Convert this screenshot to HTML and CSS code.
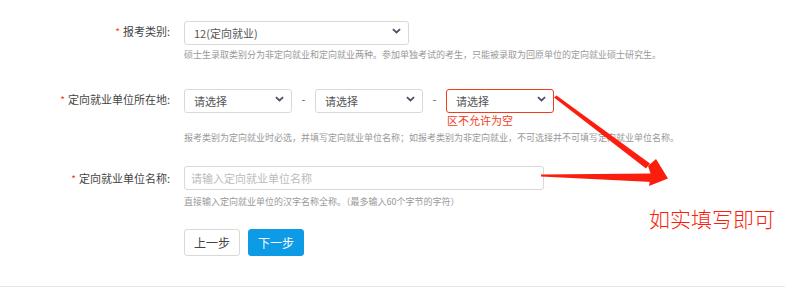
FILE: index.html
```html
<!DOCTYPE html>
<html>
<head>
    <meta charset="utf-8">
    <title>定向就业信息</title>
    <link rel="stylesheet" href="styles.css">
</head>
<body>
    <div class="page">
        <form class="apply-form">
            <div class="form-item item-type">
                <label class="form-label"><span class="req">*</span>报考类别:</label>
                <div class="form-field">
                    <div class="select-wrap wide">
                        <select class="select">
                            <option>12(定向就业)</option>
                        </select>
                        <svg class="chevron" viewBox="0 0 10 6"><path d="M1 1l4 3.6L9 1" /></svg>
                    </div>
                    <p class="help">硕士生录取类别分为非定向就业和定向就业两种。参加单独考试的考生，只能被录取为回原单位的定向就业硕士研究生。</p>
                </div>
            </div>

            <div class="form-item item-place">
                <label class="form-label"><span class="req">*</span>定向就业单位所在地:</label>
                <div class="form-field">
                    <div class="select-group">
                        <div class="select-wrap short">
                            <select class="select"><option>请选择</option></select>
                            <svg class="chevron" viewBox="0 0 10 6"><path d="M1 1l4 3.6L9 1" /></svg>
                        </div>
                        <span class="dash">-</span>
                        <div class="select-wrap short">
                            <select class="select"><option>请选择</option></select>
                            <svg class="chevron" viewBox="0 0 10 6"><path d="M1 1l4 3.6L9 1" /></svg>
                        </div>
                        <span class="dash">-</span>
                        <div class="select-col">
                            <div class="select-wrap short is-error">
                                <select class="select"><option>请选择</option></select>
                                <svg class="chevron" viewBox="0 0 10 6"><path d="M1 1l4 3.6L9 1" /></svg>
                            </div>
                            <p class="error-msg">区不允许为空</p>
                        </div>
                    </div>
                    <p class="help">报考类别为定向就业时必选，并填写定向就业单位名称；如报考类别为非定向就业，不可选择并不可填写定向就业单位名称。</p>
                </div>
            </div>

            <div class="form-item item-name">
                <label class="form-label"><span class="req">*</span>定向就业单位名称:</label>
                <div class="form-field">
                    <input class="text-input" type="text" placeholder="请输入定向就业单位名称">
                    <p class="help">直接输入定向就业单位的汉字名称全称。（最多输入60个字节的字符）</p>
                </div>
            </div>

            <div class="form-actions">
                <button type="button" class="btn btn-default">上一步</button>
                <button type="button" class="btn btn-primary">下一步</button>
            </div>
        </form>

        <!-- annotation drawn on top of the screenshot -->
        <svg class="annot-arrows" viewBox="0 0 801 289">
            <polygon points="554,97.5 556.5,95.5 650,163.5 646,168.5" />
            <polygon points="541,174.5 541,176.5 652,182 653,173.5" />
            <polygon points="656,159 668,178.5 649,186 651,175 648,166" />
        </svg>
        <div class="annot-text">如实填写即可</div>
    </div>
</body>
</html>
```

FILE: styles.css
```css
* {
    box-sizing: border-box;
}

body {
    margin: 0;
    font-family: "Noto Sans CJK SC", "Noto Sans", sans-serif;
    background-color: #fff;
    color: #333;
}

.page {
    position: relative;
    width: 785px;
    height: 287px;
    border-bottom: 1px solid #e5e5e5;
}

.apply-form {
    padding-top: 19px;
}

.form-item {
    display: grid;
    grid-template-columns: 170px 1fr;
    column-gap: 14px;
}

.item-type {
    margin-bottom: 25px;
}

.item-place {
    margin-bottom: 21px;
}

.item-name {
    margin-bottom: 20px;
}

.form-label {
    height: 24px;
    line-height: 24px;
    font-size: 11px;
    text-align: right;
    color: #444;
    white-space: nowrap;
}

.req {
    color: #f23c1e;
    font-size: 10px;
    margin-right: 3px;
}

.form-field {
    min-width: 0;
}

.select-wrap {
    position: relative;
    height: 24px;
}

.select-wrap.wide {
    width: 225px;
}

.select-wrap.short {
    width: 108px;
}

.select {
    -webkit-appearance: none;
    appearance: none;
    width: 100%;
    height: 24px;
    padding: 0 20px 0 9px;
    border: 1px solid #d9d9d9;
    border-radius: 3px;
    background-color: #fff;
    font-family: inherit;
    font-size: 11px;
    color: #555;
    outline: none;
}

.is-error .select {
    border-color: #f23c1e;
}

.chevron {
    position: absolute;
    right: 8px;
    top: 9px;
    width: 9px;
    height: 6px;
    fill: none;
    stroke: #4a5263;
    stroke-width: 2;
    pointer-events: none;
}

.select-group {
    display: flex;
    align-items: flex-start;
}

.dash {
    width: 23px;
    height: 24px;
    line-height: 24px;
    text-align: center;
    font-size: 11px;
    color: #555;
}

.select-col {
    display: flex;
    flex-direction: column;
}

.error-msg {
    margin: 2px 0 0 1px;
    height: 14px;
    line-height: 14px;
    font-size: 11px;
    color: #f23c1e;
}

.help {
    margin: 5px 0 0;
    height: 14px;
    line-height: 14px;
    font-size: 9px;
    color: #999;
    white-space: nowrap;
}

.item-place .help {
    margin-top: 4px;
}

.text-input {
    display: block;
    width: 360px;
    height: 24px;
    padding: 0 6px;
    border: 1px solid #d9d9d9;
    border-radius: 3px;
    font-family: inherit;
    font-size: 11px;
    color: #333;
    outline: none;
}

.text-input::placeholder {
    color: #bbb;
}

.form-actions {
    display: flex;
    gap: 8px;
    padding-left: 184px;
}

.btn {
    width: 56px;
    height: 27px;
    border-radius: 3px;
    font-family: inherit;
    font-size: 12px;
    cursor: pointer;
}

.btn-default {
    background-color: #fff;
    border: 1px solid #d9d9d9;
    color: #444;
}

.btn-primary {
    background-color: #0d9be6;
    border: 1px solid #0d9be6;
    color: #fff;
}

.annot-arrows {
    position: absolute;
    left: 0;
    top: 0;
    width: 801px;
    height: 289px;
    fill: #fb1e0e;
    pointer-events: none;
}

.annot-text {
    position: absolute;
    left: 649px;
    top: 204px;
    font-size: 21px;
    line-height: 28px;
    font-weight: 300;
    color: #fb1e0e;
    white-space: nowrap;
}
```
